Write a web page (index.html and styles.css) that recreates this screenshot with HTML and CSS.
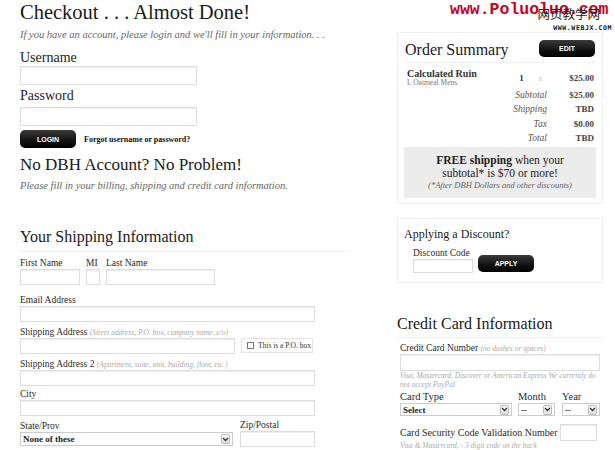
FILE: index.html
```html
<!DOCTYPE html>
<html lang="en">
<head>
    <meta charset="UTF-8">
    <meta name="viewport" content="width=device-width, initial-scale=1.0">
    <title>Checkout</title>
    <link rel="stylesheet" href="styles.css">
</head>
<body>
    <div class="watermark">
        <div class="wm-url">www.Poluoluo.com</div>
        <div class="wm-cn">网页教学网</div>
        <div class="wm-sub">WWW.WEBJX.COM</div>
    </div>
    <div class="page">
        <div class="main">
            <h1>Checkout . . . Almost Done!</h1>
            <p class="lead">If you have an account, please login and we'll fill in your information. . .</p>
            <form class="login">
                <label class="big-label" for="username">Username</label>
                <input class="text login-input" type="text" id="username">
                <label class="big-label" for="password">Password</label>
                <input class="text login-input" type="password" id="password">
                <div class="login-row">
                    <button type="button" class="btn">LOGIN</button>
                    <a class="forgot">Forgot username or password?</a>
                </div>
            </form>
            <h2 class="no-account">No DBH Account? No Problem!</h2>
            <p class="lead lead-2">Please fill in your billing, shipping and credit card information.</p>

            <h2 class="section-title">Your Shipping Information</h2>
            <div class="field-row first-row">
                <div class="field">
                    <label>First Name</label>
                    <input class="text w-first" type="text">
                </div>
                <div class="field">
                    <label>MI</label>
                    <input class="text w-mi" type="text">
                </div>
                <div class="field">
                    <label>Last Name</label>
                    <input class="text w-last" type="text">
                </div>
            </div>
            <div class="field email-field">
                <label>Email Address</label>
                <input class="text w-full" type="text">
            </div>
            <div class="field">
                <label>Shipping Address <em class="hint">(Street address, P.O. box, company name, c/o)</em></label>
                <div class="field-row">
                    <input class="text w-addr" type="text">
                    <label class="po-box"><span class="check"></span>This is a P.O. box</label>
                </div>
            </div>
            <div class="field">
                <label>Shipping Address 2 <em class="hint">(Apartment, suite, unit, building, floor, etc.)</em></label>
                <input class="text w-full" type="text">
            </div>
            <div class="field city-field">
                <label>City</label>
                <input class="text w-full" type="text">
            </div>
            <div class="field-row">
                <div class="field">
                    <label>State/Prov</label>
                    <div class="select w-state"><span>None of these</span><span class="arrow"><svg width="7" height="5" viewBox="0 0 7 5"><path d="M1 1 L3.5 3.5 L6 1" fill="none" stroke="#333" stroke-width="1.3"/></svg></span></div>
                </div>
                <div class="field zip-field">
                    <label>Zip/Postal</label>
                    <input class="text w-zip" type="text">
                </div>
            </div>
        </div>

        <div class="side">
            <div class="box summary">
                <div class="summary-head">
                    <h2>Order Summary</h2>
                    <button type="button" class="btn">EDIT</button>
                </div>
                <div class="item">
                    <div class="item-name">
                        <strong>Calculated Ruin</strong>
                        <span>L Oatmeal Mens</span>
                    </div>
                    <span class="qty">1</span>
                    <span class="times">x</span>
                    <span class="amount">$25.00</span>
                </div>
                <div class="totals">
                    <div class="total-row"><em>Subtotal</em><span>$25.00</span></div>
                    <div class="total-row"><em>Shipping</em><span>TBD</span></div>
                    <div class="total-row"><em>Tax</em><span>$0.00</span></div>
                    <div class="total-row"><em>Total</em><span>TBD</span></div>
                </div>
                <div class="free-ship">
                    <p><strong>FREE shipping</strong> when your<br>subtotal* is $70 or more!</p>
                    <em>(*After DBH Dollars and other discounts)</em>
                </div>
            </div>

            <div class="box discount">
                <h3>Applying a Discount?</h3>
                <div class="discount-row">
                    <div class="field">
                        <label>Discount Code</label>
                        <input class="text w-code" type="text">
                    </div>
                    <button type="button" class="btn">APPLY</button>
                </div>
            </div>

            <h2 class="section-title card-title">Credit Card Information</h2>
            <div class="card-fields">
                <div class="field">
                    <label>Credit Card Number <em class="hint">(no dashes or spaces)</em></label>
                    <input class="text w-card" type="text">
                    <p class="help">Visa, Mastercard, Discover or American Express We currently do not accept PayPal</p>
                </div>
                <div class="field-row card-row">
                    <div class="field">
                        <label>Card Type</label>
                        <div class="select w-type"><span>Select</span><span class="arrow"><svg width="7" height="5" viewBox="0 0 7 5"><path d="M1 1 L3.5 3.5 L6 1" fill="none" stroke="#333" stroke-width="1.3"/></svg></span></div>
                    </div>
                    <div class="field">
                        <label>Month</label>
                        <div class="select w-month"><span>--</span><span class="arrow"><svg width="7" height="5" viewBox="0 0 7 5"><path d="M1 1 L3.5 3.5 L6 1" fill="none" stroke="#333" stroke-width="1.3"/></svg></span></div>
                    </div>
                    <div class="field">
                        <label>Year</label>
                        <div class="select w-year"><span>--</span><span class="arrow"><svg width="7" height="5" viewBox="0 0 7 5"><path d="M1 1 L3.5 3.5 L6 1" fill="none" stroke="#333" stroke-width="1.3"/></svg></span></div>
                    </div>
                </div>
                <div class="cvv-row">
                    <label>Card Security Code Validation Number</label>
                    <input class="text w-cvv" type="text">
                </div>
                <p class="help">Visa &amp; Mastercard, - 3 digit code on the back</p>
            </div>
        </div>
    </div>
</body>
</html>
```

FILE: styles.css
```css
* { box-sizing: border-box; }
body {
    margin: 0;
    background: #fff;
    color: #222;
    font-family: "Liberation Serif", "Times New Roman", serif;
    overflow: hidden;
}
.page {
    display: grid;
    grid-template-columns: 340px 206px;
    column-gap: 37px;
    padding-left: 20px;
}
h1, h2, h3, p { margin: 0; font-weight: normal; }
h1 {
    font-size: 20.5px;
    line-height: 24px;
    color: #1a1a1a;
}
.lead {
    margin-top: 4px;
    font-size: 10.5px;
    line-height: 14px;
    font-style: italic;
    color: #666;
}
.login { display: flex; flex-direction: column; align-items: flex-start; }
.big-label {
    font-size: 14px;
    line-height: 16px;
    margin-top: 3px;
    margin-bottom: 3px;
    color: #222;
}
.login .big-label:first-child { margin-top: 8px; margin-bottom: 0; }
.text {
    border: 1px solid #ddd;
    box-shadow: inset 0 1px 1px #eee;
    background: #fff;
    height: 16px;
    padding: 0 3px;
    font: inherit;
}
.login-input { width: 177px; height: 19px; }
.login-row {
    display: flex;
    align-items: center;
    gap: 8px;
    margin-top: 4px;
}
.btn {
    width: 56px;
    height: 18px;
    border: none;
    border-radius: 5px;
    background: linear-gradient(#3a3a3a, #111 60%, #000);
    color: #fff;
    font-family: "Liberation Sans", Arial, sans-serif;
    font-size: 7px;
    font-weight: bold;
    padding: 0;
}
.forgot {
    font-size: 8px;
    font-weight: bold;
    color: #111;
}
.no-account {
    margin-top: 7px;
    font-size: 17px;
    line-height: 20px;
    color: #1a1a1a;
}
.lead-2 { margin-top: 4px; }
.section-title {
    font-size: 16px;
    line-height: 20px;
    color: #1a1a1a;
    padding-bottom: 4px;
    border-bottom: 1px solid #f0f0f0;
}
.main .section-title { margin-top: 34px; width: 330px; }
.field { display: flex; flex-direction: column; align-items: flex-start; }
.field label, .cvv-row label {
    display: block;
    height: 12px;
    font-size: 9.5px;
    line-height: 12px;
    color: #2a2a2a;
    white-space: nowrap;
}
.field-row { display: flex; gap: 6px; align-items: flex-start; }
.first-row { margin-top: 5px; }
.main > .field { margin-top: 4px; }
.main > .email-field { margin-top: 9px; }
.main > .city-field { margin-top: 2px; }
.main > .field-row:last-child { margin-top: 4px; }
.hint {
    font-size: 7.5px;
    line-height: 12px;
    color: #aaa;
}
.w-first { width: 60px; }
.w-mi { width: 14px; }
.w-last { width: 109px; }
.w-full { width: 295px; }
.w-addr { width: 215px; }
.field .po-box {
    display: flex;
    align-items: center;
    gap: 4px;
    width: 72px;
    height: 15px;
    border: 1px solid #e4e4e4;
    font-size: 7.5px;
    line-height: 13px;
    padding-left: 5px;
    color: #333;
}
.check {
    flex: none;
    width: 7px;
    height: 7px;
    border: 1px solid #777;
    background: #fff;
}
.select {
    display: flex;
    align-items: center;
    justify-content: space-between;
    height: 14px;
    border: 1px solid #ccc;
    background: #fff;
    font-size: 9px;
    font-weight: bold;
    color: #222;
    padding-left: 2px;
}
.arrow {
    display: flex;
    align-items: center;
    justify-content: center;
    width: 9px;
    height: 10px;
    margin-right: 2px;
    border: 1px solid #bbb;
    border-radius: 2px;
    background: linear-gradient(#fafafa, #ddd);
}
.w-state { width: 213px; }
.zip-field { margin-left: 1px; }
.zip-field label { line-height: 11px; height: 11px; }
.w-zip { width: 75px; height: 16px; }

/* right column */
.side { padding-top: 32px; }
.box {
    border: 1px solid #f0f0f0;
    padding: 6px;
}
.summary { padding-bottom: 5px; }
.summary-head {
    display: flex;
    justify-content: space-between;
    align-items: flex-start;
    border-bottom: 1px solid #f0f0f0;
    padding: 1px 1px 2px 1px;
}
.summary-head h2 { font-size: 16px; line-height: 20px; color: #1a1a1a; }
.summary-head .btn { height: 17px; margin-top: 0; }
.item {
    display: flex;
    align-items: flex-start;
    padding: 5px 2px 0 3px;
    font-size: 9px;
}
.item-name { flex: 1; display: flex; flex-direction: column; }
.item-name strong { font-size: 10px; line-height: 11px; color: #333; }
.item-name span { font-size: 7.5px; line-height: 8px; color: #777; }
.qty { font-weight: bold; margin-top: 5px; width: 19px; color: #333; }
.times { color: #ccc; margin-top: 5px; width: 31px; }
.amount { margin-top: 5px; font-weight: bold; color: #444; }
.totals { padding: 1px 2px 0 0; }
.total-row {
    display: grid;
    grid-template-columns: 1fr 47px;
    font-size: 9.5px;
    line-height: 14.3px;
    text-align: right;
    color: #444;
}
.total-row em { color: #555; }
.total-row span { font-weight: bold; font-size: 9px; }
.free-ship {
    margin-top: 2px;
    background: #ececec;
    text-align: center;
    padding: 7px 4px 7px;
}
.free-ship p { font-size: 11.5px; line-height: 12.5px; color: #222; }
.free-ship em { display: block; font-size: 8.5px; line-height: 12px; color: #666; }

.discount { margin-top: 14px; padding: 8px 6px 9px; }
.discount h3 { font-size: 12px; line-height: 14px; color: #1a1a1a; }
.discount-row {
    display: flex;
    align-items: flex-end;
    gap: 5px;
    margin-top: 6px;
    padding-left: 9px;
}
.w-code { width: 60px; height: 14px; }
.discount-row .btn { height: 17px; margin-bottom: 1px; }

.card-title { margin-top: 31px; padding-bottom: 3px; }
.card-fields { padding-left: 3px; }
.card-fields > .field { margin-top: 4px; }
.w-card { width: 200px; height: 17px; }
.help {
    font-size: 7.5px;
    line-height: 8.5px;
    font-style: italic;
    color: #aaa;
    margin-top: 1px;
    width: 205px;
}
.card-row { margin-top: 1px; gap: 6px; }
.card-row .field label { font-size: 10.5px; line-height: 13px; height: 13px; }
.w-type { width: 112px; height: 13px; }
.w-month { width: 37px; height: 13px; }
.w-year { width: 38px; height: 13px; }
.card-row .field:nth-child(3) { margin-left: 1px; }
.cvv-row {
    display: flex;
    align-items: flex-end;
    gap: 2px;
    margin-top: 8px;
}
.cvv-row label { font-size: 10px; margin-bottom: 2px; }
.w-cvv { width: 37px; height: 17px; }
.cvv-row + .help { margin-top: 1px; }

/* watermark */
.watermark {
    position: absolute;
    top: 1px;
    right: 3px;
    width: 162px;
    height: 32px;
}
.wm-url {
    font-family: "Liberation Mono", "Courier New", monospace;
    font-weight: bold;
    font-size: 16.5px;
    line-height: 18px;
    color: #c8001e;
}
.wm-cn {
    position: absolute;
    top: 5px;
    right: 12px;
    font-family: "Noto Sans CJK SC", sans-serif;
    font-size: 12.5px;
    line-height: 15px;
    color: #222;
}
.wm-sub {
    position: absolute;
    top: 23px;
    right: 0;
    font-family: "DejaVu Sans Mono", monospace;
    font-weight: bold;
    font-size: 6.5px;
    line-height: 8px;
    letter-spacing: 0.6px;
    color: #111;
}
```
